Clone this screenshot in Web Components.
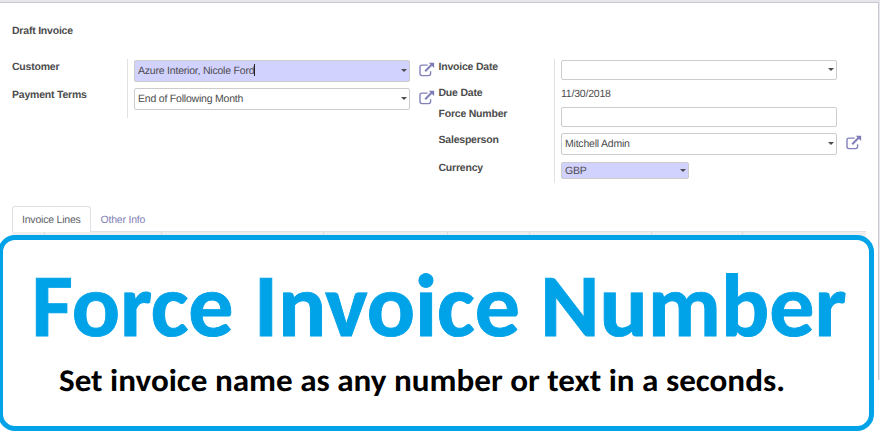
<!DOCTYPE html>
<html lang="en"><head><meta charset="utf-8"><title>Force Invoice Number</title>
<style>
html,body{margin:0;width:880px;height:440px;overflow:hidden;background:#fff}
body{font:10.5px/16px "Liberation Sans",Arial,sans-serif;letter-spacing:-.21px;color:#4c4c4c;text-rendering:geometricPrecision}
</style></head><body>
<invoice-page></invoice-page>
<script>
function define(name, html) {
  const t = document.createElement('template');
  t.innerHTML = html;
  customElements.define(name, class extends HTMLElement {
    constructor() {
      super();
      this.attachShadow({mode: 'open'}).appendChild(t.content.cloneNode(true));
    }
  });
}

define('open-icon', `<style>:host{display:block;width:16px;height:16px}svg{display:block}</style>
<svg width="16" height="16" viewBox="0 0 16 16" fill="none" stroke="#8381ba">
<path d="M8.6 3.1H3Q1 3.1 1 5V11.6Q1 13.6 3 13.6H9.5Q11.6 13.6 11.6 11.6V9.3" stroke-width="1.4"/>
<path d="M6.2 9.2L12.6 2.8" stroke-width="2.1"/>
<path d="M9.8 .8H15.1V6.1Z" fill="#7c7bb8" stroke="none"/></svg>`);

define('form-label', `<style>:host{display:block;font-weight:700;white-space:nowrap}</style><slot></slot>`);

define('form-input', `<style>
:host{display:flex;box-sizing:border-box;border:1px solid #ccc;border-radius:2px;background:#fff;height:var(--h,22px);width:var(--w,276px);align-items:center;justify-content:space-between;padding:0 2px 0 3px;white-space:nowrap}
:host([required]){background:#d2d2ff}
i{display:none;border:3px solid transparent;border-top:3.5px solid #4c4c4c;border-bottom:0;margin-bottom:var(--lift,2px)}
:host([select]) i{display:block}
</style><span><slot></slot></span><i></i>`);

define('form-row', `<style>:host{display:grid;grid-template-columns:var(--label) 276px 16px;column-gap:9px;align-items:start;height:var(--row)}
slot[name=label]{display:block}.f{padding-top:var(--drop,1px)}.i{padding-top:3px}</style>
<slot name="label"></slot><div class="f"><slot></slot></div><div class="i"><slot name="icon"></slot></div>`);

define('tab-item', `<style>:host{display:block;box-sizing:border-box;height:26px;padding:5px 9px 0;color:#8381b8;white-space:nowrap;border:1px solid transparent;border-bottom:0}
:host([active]){color:#5b6169;background:#fff;border-color:#dee2e6;border-radius:3px 3px 0 0}</style><slot></slot>`);

define('promo-banner', `<style>
:host{display:block;position:absolute;left:-2px;top:235px;width:876px;height:196px;box-sizing:border-box;border:5px solid #00a2e8;border-radius:17px;background:#fff}
svg{display:block;font-family:Carlito,Lato,sans-serif;font-weight:700;letter-spacing:0}
</style><svg width="866" height="186" viewBox="3 240 866 186">
<text x="31.5" y="335.7" font-size="89" fill="#00a2e8" stroke="#00a2e8" stroke-width=".9" textLength="815" lengthAdjust="spacingAndGlyphs">Force Invoice Number</text>
<text x="59" y="391" font-size="31.5" fill="#000" textLength="726" lengthAdjust="spacingAndGlyphs">Set invoice name as any number or text in a seconds.</text>
</svg>`);

define('invoice-page', `<style>
:host{display:block;height:440px;overflow:hidden;position:relative}
.bg{height:380px;box-sizing:border-box;padding:2px 1px 0 0;background:#e7e7eb}
.sheet{height:378px;box-sizing:border-box;background:#fff;border-top:1px solid #c9c9d5;border-right:1px solid #c9c9d5;padding:20px 12px 0}
.cols{display:grid;grid-template-columns:426.5px 1fr;height:147px;margin-top:20px}
.group{display:grid;align-content:start}
.left{--label:113px;height:59px}
.right{--label:113.5px;height:124px}
.left,.right{background:linear-gradient(#e2e2e2,#e2e2e2) var(--line) 0/1px 100% no-repeat}
.left{--line:115px}.right{--line:115.5px}
.tabs{display:flex;border-bottom:1px solid #dee2e6;height:25px;width:854px}
.head{display:grid;width:854px;height:6px;background:#eee;grid-template-columns:33px 117px 162px 124px 82px 122px 91px 1fr}
.head b{border-right:1px solid #dadde1}.head b:last-child{border:0}
.caret{display:inline-block;width:1px;height:12px;background:#222;vertical-align:-2px}
</style>
<div class="bg"><div class="sheet">
<form-label>Draft Invoice</form-label>
<div class="cols">
<div class="group left">
<form-row style="--row:28px"><form-label slot="label">Customer</form-label><form-input select required>Azure Interior, Nicole Ford<span class="caret"></span></form-input><open-icon slot="icon"></open-icon></form-row>
<form-row style="--row:28px"><form-label slot="label">Payment Terms</form-label><form-input select>End of Following Month</form-input><open-icon slot="icon"></open-icon></form-row>
</div>
<div class="group right">
<form-row style="--row:26px"><form-label slot="label">Invoice Date</form-label><form-input select style="--h:20px"></form-input></form-row>
<form-row style="--row:21px"><form-label slot="label">Due Date</form-label><span>11/30/2018</span></form-row>
<form-row style="--row:26px"><form-label slot="label">Force Number</form-label><form-input style="--h:20px"></form-input></form-row>
<form-row style="--row:28px"><form-label slot="label">Salesperson</form-label><form-input select>Mitchell Admin</form-input><open-icon slot="icon"></open-icon></form-row>
<form-row style="--row:22px;--drop:2px"><form-label slot="label">Currency</form-label><form-input select required style="--h:17px;--w:128px;--lift:0px">GBP</form-input></form-row>
</div></div>
<div class="tabs"><tab-item active>Invoice Lines</tab-item><tab-item>Other Info</tab-item></div>
<div class="head"><b></b><b></b><b></b><b></b><b></b><b></b><b></b><b></b></div>
</div></div>
<promo-banner></promo-banner>`);
</script></body></html>
